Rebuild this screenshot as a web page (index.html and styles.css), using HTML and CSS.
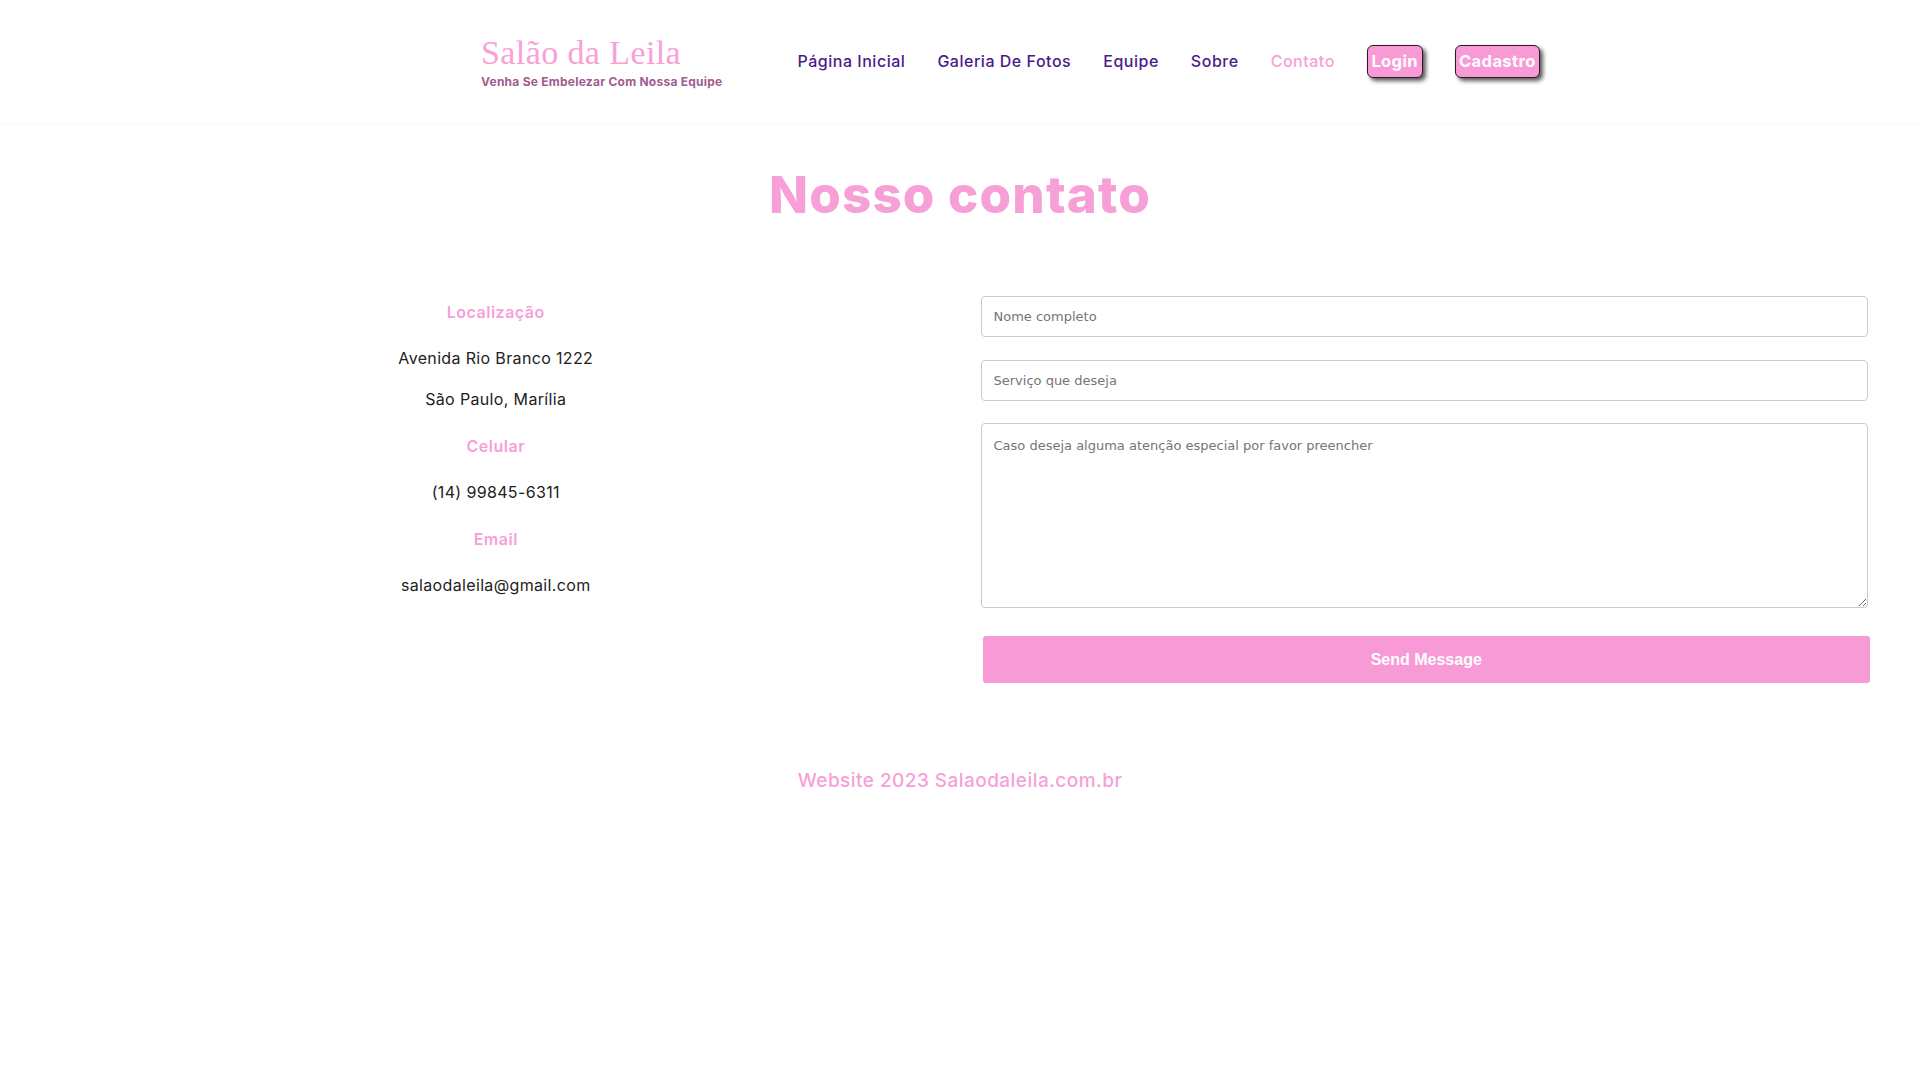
FILE: index.html
```html
<!DOCTYPE html>
<html lang="pt-BR">
<head>
<meta charset="utf-8">
<title>Salão da Leila - Contato</title>
<link rel="stylesheet" href="styles.css">
</head>
<body>
<header class="hdr">
  <div class="hdr-inner">
    <div class="brand">
      <div class="brand-name">Salão da Leila</div>
      <div class="brand-sub">Venha Se Embelezar Com Nossa Equipe</div>
    </div>
    <nav class="nav">
      <a class="nav-link" href="#">Página Inicial</a>
      <a class="nav-link" href="#">Galeria De Fotos</a>
      <a class="nav-link" href="#">Equipe</a>
      <a class="nav-link" href="#">Sobre</a>
      <a class="nav-link active" href="#">Contato</a>
      <a class="nav-btn" href="#">Login</a>
      <a class="nav-btn" href="#">Cadastro</a>
    </nav>
  </div>
</header>

<main>
  <h1 class="title">Nosso contato</h1>
  <section class="contact">
    <div class="info">
      <h3 class="info-h">Localização</h3>
      <div class="addr">
        <p class="info-p">Avenida Rio Branco 1222</p>
        <p class="info-p">São Paulo, Marília</p>
      </div>
      <h3 class="info-h">Celular</h3>
      <p class="info-p">(14) 99845-6311</p>
      <h3 class="info-h">Email</h3>
      <p class="info-p">salaodaleila@gmail.com</p>
    </div>
    <form class="form">
      <input class="field" type="text" placeholder="Nome completo">
      <input class="field" type="text" placeholder="Serviço que deseja">
      <textarea class="area" placeholder="Caso deseja alguma atenção especial por favor preencher"></textarea>
      <button class="send" type="button">Send Message</button>
    </form>
  </section>
</main>

<footer class="foot">Website 2023 Salaodaleila.com.br</footer>
</body>
</html>
```

FILE: styles.css
```css
* { box-sizing: border-box; }

body {
  margin: 0;
  background: #ffffff;
  font-family: Inter, "Open Sans", sans-serif;
  color: #222222;
}

.hdr {
  height: 122px;
  box-shadow: 0 1px 5px rgba(0, 0, 0, 0.035);
}

.hdr-inner {
  display: flex;
  align-items: center;
  padding: 35px 0 0 481px;
}

.brand {
  display: flex;
  flex-direction: column;
}

.brand-name {
  font-family: "Liberation Serif", serif;
  font-size: 34px;
  line-height: 36px;
  letter-spacing: 0.4px;
  color: #f9a0d8;
}

.brand-sub {
  margin-top: 3.5px;
  font-size: 12px;
  line-height: 14px;
  font-weight: 700;
  letter-spacing: 0.25px;
  color: #a05c8f;
}

.nav {
  display: flex;
  align-items: center;
  gap: 32px;
  margin-left: 75px;
}

.nav-link {
  position: relative;
  top: -1px;
  font-size: 16px;
  font-weight: 500;
  letter-spacing: 0.52px;
  color: #4a1b8a;
  text-decoration: none;
}

.nav-link.active {
  color: #f79fd7;
}

.nav-btn {
  display: block;
  height: 33px;
  line-height: 31px;
  padding: 0 3.5px;
  border: 1px solid #2a1a24;
  border-radius: 6px;
  background: #f79ad6;
  color: #ffffff;
  font-size: 16.5px;
  font-weight: 700;
  letter-spacing: 0.4px;
  text-decoration: none;
  box-shadow: 3px 3px 4px rgba(0, 0, 0, 0.65);
}

.title {
  margin: 42px 0 0;
  text-align: center;
  font-size: 51px;
  line-height: 61px;
  font-weight: 800;
  letter-spacing: 1.2px;
  color: #f79fd7;
}

.contact {
  display: grid;
  grid-template-columns: 1fr 1fr;
  column-gap: 41px;
  padding: 0 52px;
  margin-top: 71px;
}

.info {
  display: flex;
  flex-direction: column;
  align-items: center;
  gap: 22.4px;
  padding-top: 4px;
}

.addr {
  display: flex;
  flex-direction: column;
  align-items: center;
  gap: 17px;
}

.info-h {
  margin: 0;
  font-size: 16px;
  line-height: 24px;
  font-weight: 600;
  letter-spacing: 0.5px;
  color: #f79fd7;
}

.info-p {
  margin: 0;
  font-size: 16px;
  line-height: 24px;
  letter-spacing: 0.35px;
  color: #222222;
}

.form {
  display: flex;
  flex-direction: column;
  align-items: stretch;
}

.field,
.area {
  width: 100%;
  border: 1px solid #cccccc;
  border-radius: 4px;
  background: #ffffff;
  font-family: "DejaVu Sans", Verdana, sans-serif;
  font-size: 13px;
  color: #333333;
}

.field {
  height: 41px;
  padding: 0 12px;
  margin-bottom: 22.5px;
}

.area {
  height: 185px;
  padding: 14px 12px;
  resize: vertical;
}

.field::placeholder,
.area::placeholder {
  color: #757575;
}

.send {
  width: 100%;
  height: 47px;
  margin: 28px 0 0 2px;
  border: none;
  border-radius: 3px;
  background: #f79ad6;
  color: #ffffff;
  font-family: "Liberation Sans", Arial, sans-serif;
  font-size: 16px;
  font-weight: 700;
}

.foot {
  margin-top: 84px;
  text-align: center;
  font-size: 19px;
  line-height: 28px;
  font-weight: 500;
  letter-spacing: 0.45px;
  color: #f79fd7;
}
```
